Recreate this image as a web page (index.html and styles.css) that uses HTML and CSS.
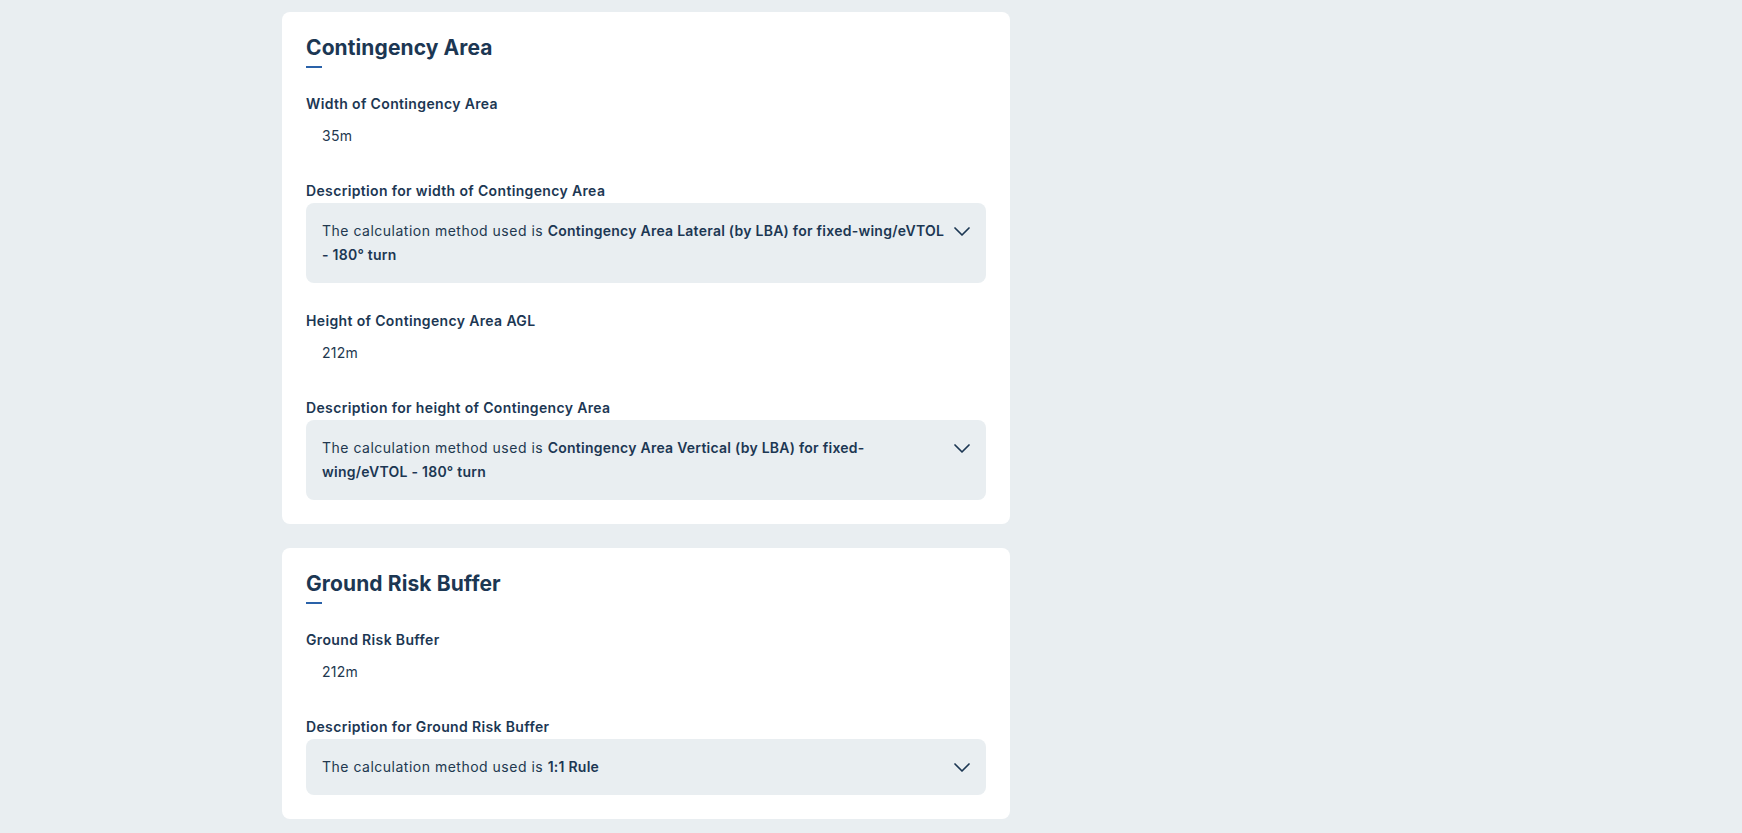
FILE: index.html
```html
<!DOCTYPE html>
<html lang="en">
<head>
<meta charset="utf-8">
<title>Contingency Area</title>
<link rel="stylesheet" href="styles.css">
</head>
<body>
<main class="column">
  <section class="card">
    <h2 class="card-title">Contingency Area</h2>
    <div class="fields">
      <div class="field">
        <div class="field-label">Width of Contingency Area</div>
        <div class="field-value">35m</div>
      </div>
      <div class="field">
        <div class="field-label">Description for width of Contingency Area</div>
        <div class="desc-box">
          <p class="desc-text">The calculation method used is <b>Contingency Area Lateral (by LBA) for fixed-wing/eVTOL - 180° turn</b></p>
          <span class="chevron"><svg viewBox="0 0 16 9" width="16" height="9"><path d="M1 1 L8 8 L15 1" fill="none" stroke="currentColor" stroke-width="1.7" stroke-linecap="round" stroke-linejoin="round"/></svg></span>
        </div>
      </div>
      <div class="field">
        <div class="field-label">Height of Contingency Area AGL</div>
        <div class="field-value">212m</div>
      </div>
      <div class="field">
        <div class="field-label">Description for height of Contingency Area</div>
        <div class="desc-box">
          <p class="desc-text">The calculation method used is <b>Contingency Area Vertical (by LBA) for fixed-wing/eVTOL - 180° turn</b></p>
          <span class="chevron"><svg viewBox="0 0 16 9" width="16" height="9"><path d="M1 1 L8 8 L15 1" fill="none" stroke="currentColor" stroke-width="1.7" stroke-linecap="round" stroke-linejoin="round"/></svg></span>
        </div>
      </div>
    </div>
  </section>

  <section class="card">
    <h2 class="card-title">Ground Risk Buffer</h2>
    <div class="fields">
      <div class="field">
        <div class="field-label">Ground Risk Buffer</div>
        <div class="field-value">212m</div>
      </div>
      <div class="field">
        <div class="field-label">Description for Ground Risk Buffer</div>
        <div class="desc-box">
          <p class="desc-text">The calculation method used is <b>1:1 Rule</b></p>
          <span class="chevron"><svg viewBox="0 0 16 9" width="16" height="9"><path d="M1 1 L8 8 L15 1" fill="none" stroke="currentColor" stroke-width="1.7" stroke-linecap="round" stroke-linejoin="round"/></svg></span>
        </div>
      </div>
    </div>
  </section>
</main>
</body>
</html>
```
FILE: styles.css
```css
html, body {
  margin: 0;
  padding: 0;
}
body {
  background: #e9eef1;
  font-family: Inter, "Noto Sans", sans-serif;
  color: #1e3954;
  height: 833px;
  overflow: hidden;
}
.column {
  display: flex;
  flex-direction: column;
  gap: 24px;
  width: 728px;
  padding: 12px 0 0 282px;
}
.card {
  background: #ffffff;
  border-radius: 8px;
  padding: 20px 24px 24px;
}
.card-title {
  margin: 0;
  font-size: 21px;
  line-height: 32px;
  font-weight: 700;
  letter-spacing: 0.1px;
  color: #1c3753;
}
.card-title::after {
  content: "";
  display: block;
  width: 16px;
  height: 2px;
  margin-top: 2px;
  background: #2a62a9;
}
.fields {
  display: flex;
  flex-direction: column;
  gap: 28px;
  margin-top: 26px;
}
.field {
  display: flex;
  flex-direction: column;
  gap: 2px;
}
.field-label {
  font-size: 14px;
  line-height: 20px;
  font-weight: 600;
  letter-spacing: 0.35px;
  color: #1c3753;
}
.field-value {
  font-size: 14px;
  line-height: 24px;
  padding: 8px 16px 5px;
  letter-spacing: 0.25px;
  color: #22384f;
}
.desc-box {
  display: flex;
  align-items: flex-start;
  gap: 6px;
  background: #e9eef1;
  border-radius: 8px;
  padding: 16px;
}
.desc-text {
  flex: 1;
  margin: 0;
  font-size: 14px;
  line-height: 24px;
  letter-spacing: 0.5px;
  color: #22384f;
}
.desc-text b {
  font-weight: 600;
  letter-spacing: 0.25px;
  color: #1c3753;
}
.chevron {
  flex: none;
  width: 16px;
  height: 24px;
  display: flex;
  align-items: center;
  justify-content: center;
  color: #1c3753;
}
.chevron svg {
  display: block;
}
```
